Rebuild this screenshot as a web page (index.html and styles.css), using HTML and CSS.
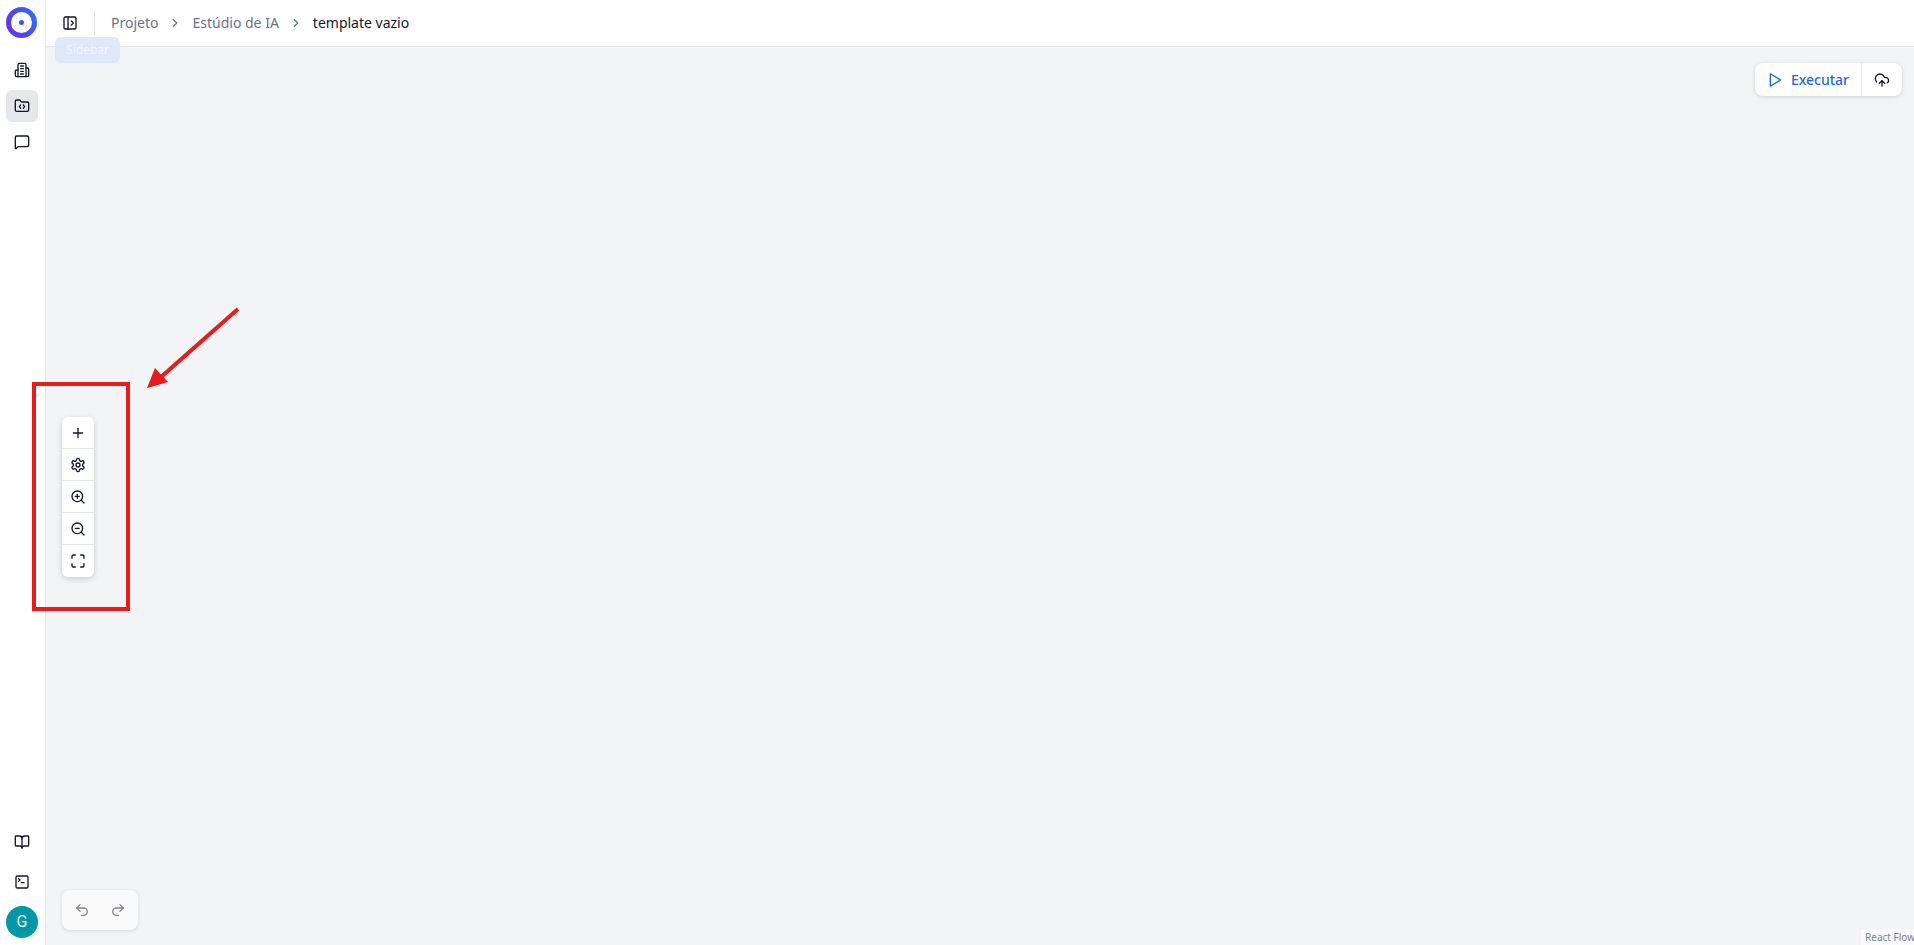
FILE: index.html
```html
<!DOCTYPE html>
<html lang="pt">
<head>
<meta charset="utf-8">
<title>template vazio</title>
<link rel="stylesheet" href="styles.css">
</head>
<body>
<div class="app">
  <aside class="sidebar">
    <div class="nav-top">
      <div class="logo"><span class="logo-inner"><span class="logo-dot"></span></span></div>
      <div class="nav-group">
        <button class="nav-btn"><svg class="icon" viewBox="0 0 24 24"><path d="M6 22V4a2 2 0 0 1 2-2h8a2 2 0 0 1 2 2v18Z"/><path d="M6 12H4a2 2 0 0 0-2 2v6a2 2 0 0 0 2 2h2"/><path d="M18 9h2a2 2 0 0 1 2 2v9a2 2 0 0 1-2 2h-2"/><path d="M10 6h4"/><path d="M10 10h4"/><path d="M10 14h4"/><path d="M10 18h4"/></svg></button>
        <button class="nav-btn active"><svg class="icon" viewBox="0 0 24 24"><path d="M10 10.5 8 13l2 2.5"/><path d="m14 10.5 2 2.5-2 2.5"/><path d="M20 20a2 2 0 0 0 2-2V8a2 2 0 0 0-2-2h-7.9a2 2 0 0 1-1.69-.9L9.6 3.9A2 2 0 0 0 7.93 3H4a2 2 0 0 0-2 2v13a2 2 0 0 0 2 2z"/></svg></button>
        <button class="nav-btn"><svg class="icon" viewBox="0 0 24 24"><path d="M22 17a2 2 0 0 1-2 2H6.828a2 2 0 0 0-1.414.586l-2.202 2.202A.71.71 0 0 1 2 21.286V5a2 2 0 0 1 2-2h16a2 2 0 0 1 2 2z"/></svg></button>
      </div>
    </div>
    <div class="nav-bottom">
      <button class="nav-btn"><svg class="icon" viewBox="0 0 24 24"><path d="M12 7v14"/><path d="M3 18a1 1 0 0 1-1-1V4a1 1 0 0 1 1-1h5a4 4 0 0 1 4 4 4 4 0 0 1 4-4h5a1 1 0 0 1 1 1v13a1 1 0 0 1-1 1h-6a3 3 0 0 0-3 3 3 3 0 0 0-3-3z"/></svg></button>
      <button class="nav-btn"><svg class="icon" viewBox="0 0 24 24"><path d="m7 11 2-2-2-2"/><path d="M11 13h4"/><rect x="3" y="3" width="18" height="18" rx="2"/></svg></button>
      <div class="avatar">G</div>
    </div>
  </aside>
  <main class="main">
    <header class="topbar">
      <button class="toggle"><svg class="icon" viewBox="0 0 24 24"><rect x="3" y="3" width="18" height="18" rx="2"/><path d="M9 3v18"/><path d="m14 9 3 3-3 3"/></svg></button>
      <span class="vr"></span>
      <nav class="crumbs">
        <span class="crumb">Projeto</span>
        <svg class="chev" viewBox="0 0 24 24"><path d="m9 18 6-6-6-6"/></svg>
        <span class="crumb">Estúdio de IA</span>
        <svg class="chev" viewBox="0 0 24 24"><path d="m9 18 6-6-6-6"/></svg>
        <span class="crumb current">template vazio</span>
      </nav>
    </header>
    <section class="canvas">
      <div class="tooltip">Sidebar</div>

      <div class="run-panel">
        <button class="run-btn"><svg class="icon blue" viewBox="0 0 24 24"><path d="M5 2.7v18.6L20.5 12Z"/></svg><span>Executar</span></button>
        <button class="publish-btn"><svg class="icon" viewBox="0 0 24 24"><path d="M12 13v8"/><path d="M4 14.9A7 7 0 1 1 15.7 8h1.8a4.5 4.5 0 0 1 2.5 8.2"/><path d="m8 17 4-4 4 4"/></svg></button>
      </div>

      <div class="tools">
        <button class="tool"><svg class="icon" viewBox="0 0 24 24"><path d="M5 12h14"/><path d="M12 5v14"/></svg></button>
        <button class="tool"><svg class="icon" viewBox="0 0 24 24"><path d="M12.22 2h-.44a2 2 0 0 0-2 2v.18a2 2 0 0 1-1 1.73l-.43.25a2 2 0 0 1-2 0l-.15-.08a2 2 0 0 0-2.73.73l-.22.38a2 2 0 0 0 .73 2.73l.15.1a2 2 0 0 1 1 1.72v.51a2 2 0 0 1-1 1.74l-.15.09a2 2 0 0 0-.73 2.73l.22.38a2 2 0 0 0 2.73.73l.15-.08a2 2 0 0 1 2 0l.43.25a2 2 0 0 1 1 1.73V20a2 2 0 0 0 2 2h.44a2 2 0 0 0 2-2v-.18a2 2 0 0 1 1-1.73l.43-.25a2 2 0 0 1 2 0l.15.08a2 2 0 0 0 2.73-.73l.22-.39a2 2 0 0 0-.73-2.73l-.15-.08a2 2 0 0 1-1-1.74v-.5a2 2 0 0 1 1-1.74l.15-.09a2 2 0 0 0 .73-2.73l-.22-.38a2 2 0 0 0-2.73-.73l-.15.08a2 2 0 0 1-2 0l-.43-.25a2 2 0 0 1-1-1.73V4a2 2 0 0 0-2-2z"/><circle cx="12" cy="12" r="3"/></svg></button>
        <button class="tool"><svg class="icon" viewBox="0 0 24 24"><circle cx="11" cy="11" r="8"/><path d="m21 21-4.3-4.3"/><path d="M11 8v6"/><path d="M8 11h6"/></svg></button>
        <button class="tool"><svg class="icon" viewBox="0 0 24 24"><circle cx="11" cy="11" r="8"/><path d="m21 21-4.3-4.3"/><path d="M8 11h6"/></svg></button>
        <button class="tool"><svg class="icon" viewBox="0 0 24 24"><path d="M8 3H5a2 2 0 0 0-2 2v3"/><path d="M21 8V5a2 2 0 0 0-2-2h-3"/><path d="M3 16v3a2 2 0 0 0 2 2h3"/><path d="M16 21h3a2 2 0 0 0 2-2v-3"/></svg></button>
      </div>

      <div class="history">
        <button class="hist-btn"><svg class="icon muted" viewBox="0 0 24 24"><path d="M9 14 4 9l5-5"/><path d="M4 9h10.5a5.5 5.5 0 0 1 5.5 5.5 5.5 5.5 0 0 1-5.5 5.5H11"/></svg></button>
        <button class="hist-btn"><svg class="icon muted" viewBox="0 0 24 24"><path d="m15 14 5-5-5-5"/><path d="M20 9H9.5A5.5 5.5 0 0 0 4 14.5 5.5 5.5 0 0 0 9.5 20H13"/></svg></button>
      </div>

      <div class="attribution">React Flow</div>
    </section>
  </main>
</div>

<div class="callout-box"></div>
<svg class="callout-arrow" viewBox="0 0 110 90"><path class="arrow-shaft" d="M91 2 14 70"/><path class="arrow-head" d="M0 81 8 61 21 75Z"/></svg>
</body>
</html>
```
FILE: styles.css
```css
* { box-sizing: border-box; }
html, body { margin: 0; height: 100%; overflow: hidden; }
body { font-family: "Noto Sans", "Open Sans", sans-serif; color: #0f172a; background: #fff; }
button { border: 0; background: none; padding: 0; margin: 0; display: flex; align-items: center; justify-content: center; font: inherit; }

.icon { width: 16px; height: 16px; fill: none; stroke: #111827; stroke-width: 2; stroke-linecap: round; stroke-linejoin: round; display: block; }
.icon.blue { stroke: #2563eb; }
.icon.muted { stroke: #84878f; }

.app { display: flex; height: 945px; width: 1914px; }

.sidebar { width: 46px; flex: none; border-right: 1px solid #e5e7eb; background: #fff; display: flex; flex-direction: column; justify-content: space-between; align-items: center; padding: 7px 1px 7px 0; }
.nav-top { display: flex; flex-direction: column; align-items: center; }
.logo { width: 31px; height: 31px; margin-right: 1px; border-radius: 50%; background: linear-gradient(60deg, #6a2ce8 0%, #4a4cf0 50%, #2a78f6 100%); display: flex; align-items: center; justify-content: center; }
.logo-inner { width: 21px; height: 21px; border-radius: 50%; background: #fff; display: flex; align-items: center; justify-content: center; }
.logo-dot { width: 5px; height: 5px; border-radius: 50%; background: #2563eb; }
.nav-group { display: flex; flex-direction: column; gap: 4px; margin-top: 16px; }
.nav-bottom { display: flex; flex-direction: column; align-items: center; gap: 8px; }
.nav-btn { width: 32px; height: 32px; border-radius: 6px; }
.nav-btn.active { background: #e5e7eb; }
.avatar { width: 32px; height: 32px; border-radius: 50%; background: #0097a7; color: #fff; font-size: 16px; line-height: 32px; text-align: center; font-family: "Roboto", sans-serif; }

.main { flex: 1; min-width: 0; display: flex; flex-direction: column; }
.topbar { height: 47px; flex: none; background: #fff; border-bottom: 1px solid #e5e7eb; display: flex; align-items: center; padding: 0 0 1px 16px; }
.toggle { width: 16px; height: 16px; }
.vr { width: 1px; height: 24px; background: #e5e7eb; margin: 0 16px 0 16px; }
.crumbs { display: flex; align-items: center; gap: 10px; font-size: 14px; }
.crumb { color: #64748b; }
.crumb.current { color: #0f172a; }
.chev { width: 14px; height: 14px; fill: none; stroke: #64748b; stroke-width: 2; stroke-linecap: round; stroke-linejoin: round; }

.canvas { position: relative; flex: 1; background: #f3f4f6; }
.tooltip { position: absolute; left: 9px; top: -10px; width: 65px; height: 26px; border-radius: 6px; background: rgba(219, 229, 250, .85); color: #f1f5fd; font-size: 12px; line-height: 26px; text-align: center; }

.run-panel { position: absolute; right: 12px; top: 16px; height: 33px; display: flex; background: #fff; border-radius: 8px; box-shadow: 0 1px 4px rgba(0,0,0,.14); }
.run-btn { width: 107px; gap: 8px; color: #2563eb; font-size: 14px; font-weight: 500; border-right: 1px solid #e5e7eb; }
.publish-btn { width: 40px; }

.tools { position: absolute; left: 16px; top: 370px; width: 32px; display: flex; flex-direction: column; background: #fff; border-radius: 6px; box-shadow: 0 2px 6px rgba(0,0,0,.16); }
.tool { height: 32px; border-bottom: 1px solid #e5e7eb; }
.tool:last-child { border-bottom: 0; }

.history { position: absolute; left: 16px; top: 843px; width: 76px; height: 40px; display: flex; align-items: center; justify-content: center; gap: 20px; background: #fafafa; border-radius: 8px; box-shadow: 0 1px 4px rgba(0,0,0,.12); }
.hist-btn { width: 16px; height: 16px; }

.attribution { position: absolute; right: -1px; bottom: 0; height: 16px; padding: 0 0 0 4px; background: rgba(255,255,255,.5); color: #7b8190; font-size: 10px; line-height: 16px; white-space: nowrap; }

.callout-box { position: fixed; left: 32px; top: 382px; width: 98px; height: 229px; border: 4px solid #e81c1c; }
.callout-arrow { position: fixed; left: 147px; top: 307px; width: 110px; height: 90px; overflow: visible; }
.arrow-shaft { fill: none; stroke: #e81c1c; stroke-width: 4; }
.arrow-head { fill: #e81c1c; }
```
